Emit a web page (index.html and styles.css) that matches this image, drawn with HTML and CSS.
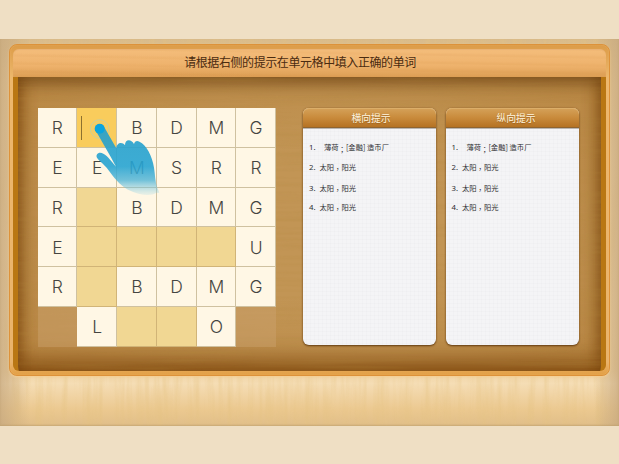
FILE: index.html
```html
<!DOCTYPE html>
<html lang="zh-CN">
<head>
<meta charset="utf-8">
<title>填词游戏</title>
<link rel="stylesheet" href="styles.css">
</head>
<body>
<main class="stage">
  <svg class="grain" aria-hidden="true">
    <filter id="vgrain" x="0" y="0" width="100%" height="100%"><feTurbulence type="fractalNoise" baseFrequency="0.16 0.012" numOctaves="3" seed="4"/><feColorMatrix values="0 0 0 0 .78  0 0 0 0 .54  0 0 0 0 .22  1.5 0 0 0 -.58"/></filter>
    <rect width="100%" height="100%" filter="url(#vgrain)"/>
  </svg>
  <div class="stage-shade"></div>
  <section class="board">
    <header class="title"><h1>请根据右侧的提示在单元格中填入正确的单词</h1></header>
    <div class="well">
      <svg class="grain" aria-hidden="true">
        <filter id="hgrain" x="0" y="0" width="100%" height="100%"><feTurbulence type="fractalNoise" baseFrequency="0.008 0.2" numOctaves="3" seed="8"/><feColorMatrix values="0 0 0 0 .45  0 0 0 0 .25  0 0 0 0 .05  .8 0 0 0 -.32"/></filter>
        <rect width="100%" height="100%" filter="url(#hgrain)"/>
      </svg>
      <div class="puzzle">
        <div class="cells">
          <span>R</span><span class="active"><i class="caret"></i></span><span>B</span><span>D</span><span>M</span><span>G</span>
          <span>E</span><span>E</span><span>M</span><span>S</span><span>R</span><span>R</span>
          <span>R</span><span class="blank"></span><span>B</span><span>D</span><span>M</span><span>G</span>
          <span>E</span><span class="blank"></span><span class="blank"></span><span class="blank"></span><span class="blank"></span><span>U</span>
          <span>R</span><span class="blank"></span><span>B</span><span>D</span><span>M</span><span>G</span>
          <span class="off"></span><span>L</span><span class="blank"></span><span class="blank"></span><span>O</span><span class="off"></span>
        </div>
        <svg class="hand" viewBox="0 0 420 330" aria-hidden="true">
          <defs><linearGradient id="skin" gradientUnits="userSpaceOnUse" x1="0" y1="85" x2="0" y2="290">
            <stop offset="0" stop-color="#249fcb" stop-opacity=".9"/><stop offset=".56" stop-color="#27a4d2" stop-opacity=".9"/><stop offset=".76" stop-color="#4ab2d6" stop-opacity=".78"/><stop offset="1" stop-color="#9bd7ea" stop-opacity=".12"/>
          </linearGradient></defs>
          <circle cx="209" cy="87" r="28" fill="none" stroke="#c9cf9c" stroke-width="3"/>
          <circle cx="209" cy="87" r="21" fill="none" stroke="#dccf86" stroke-width="2"/>
          <path d="M196 90C194 70 218 65 223 82L259 145C259 129 276 123 285 136C284 119 302 114 312 132C315 119 326 121 336 130C356 146 371 181 374 218C376 239 378 258 388 278L378 279C364 289 327 286 294 269C268 255 250 230 235 210C224 194 211 187 202 175C194 162 208 153 220 161C234 168 244 184 258 200C239 163 217 128 196 90Z" fill="url(#skin)"/>
          <circle cx="209" cy="86" r="15" fill="#08a4df"/>
        </svg>
      </div>
      <div class="clues">
        <article class="card across">
          <h2>横向提示</h2>
          <ol>
            <li class="first"><b>1.</b>薄荷<i>；</i>[金融] 造币厂</li>
            <li><b>2.</b>太阳<i>，</i>阳光</li>
            <li><b>3.</b>太阳<i>，</i>阳光</li>
            <li><b>4.</b>太阳<i>，</i>阳光</li>
          </ol>
        </article>
        <article class="card down">
          <h2>纵向提示</h2>
          <ol>
            <li class="first"><b>1.</b>薄荷<i>；</i>[金融] 造币厂</li>
            <li><b>2.</b>太阳<i>，</i>阳光</li>
            <li><b>3.</b>太阳<i>，</i>阳光</li>
            <li><b>4.</b>太阳<i>，</i>阳光</li>
          </ol>
        </article>
      </div>
    </div>
  </section>
</main>
</body>
</html>
```
FILE: styles.css
```css
* { box-sizing: border-box; }

body {
  margin: 0;
  height: 464px;
  padding-top: 39px;
  background: #efdfc4;
  font-family: "Noto Sans CJK SC", sans-serif;
  overflow: hidden;
}

.stage {
  position: relative;
  height: 387px;
  padding: 4.5px 9.5px 0 9px;
  background: linear-gradient(#d9bb8b 0, #e8ca9a 12%, #efd3a4 86%, #f5ddb5 89%, #ebc88f 96%, #e0be89 100%);
}

.grain {
  position: absolute;
  inset: 0;
  width: 100%;
  height: 100%;
  opacity: .6;
}

.stage-shade {
  position: absolute;
  inset: 0;
  background: linear-gradient(90deg, rgba(198, 168, 127, .75), transparent 30px, transparent calc(100% - 25px), rgba(198, 168, 127, .75));
  box-shadow: inset 0 -1px 2px rgba(190, 160, 110, .7);
}

.board {
  position: relative;
  height: 332.5px;
  padding: 4px 3px 4px 2.5px;
  border: 1.5px solid #dd923a;
  border-radius: 8px;
  background: linear-gradient(#dc9c48, #edb76c 10%, #e9b36b 96%, #e39f45);
  box-shadow: 0 1px 2px rgba(245, 205, 145, .9), inset 0 0 1px #f5c27c;
}

.title {
  height: 28.5px;
  padding-right: 18px;
  display: flex;
  align-items: center;
  justify-content: center;
  border-radius: 6px 6px 0 0;
  background: repeating-linear-gradient(1deg, transparent 0 4px, rgba(205, 132, 54, .08) 5px 6px, transparent 8px), linear-gradient(#f4bd7b, #eeb26c 60%, #dc9e54);
  box-shadow: inset 0 1px 1px #e9b275;
}

h1 {
  margin: 0;
  padding-bottom: 2px;
  font-size: 12px;
  line-height: 18px;
  letter-spacing: -.42px;
  font-weight: 400;
  color: #4a2b10;
}

.well {
  position: relative;
  height: 294px;
  padding: 31px 22px 0 20px;
  display: flex;
  justify-content: space-between;
  align-items: flex-start;
  border: solid #b97713;
  border-width: 0 5px;
  border-radius: 0 0 6px 6px;
  overflow: hidden;
  background: radial-gradient(ellipse at center, #c29555 35%, #b98743 100%);
  box-shadow: inset 0 13px 15px -5px rgba(100, 60, 16, .6), inset 0 -18px 22px -7px rgba(126, 70, 12, .85), inset 11px 0 14px -6px rgba(130, 74, 14, .6), inset -11px 0 14px -6px rgba(130, 74, 14, .55);
}

.puzzle {
  position: relative;
  width: 238.5px;
}

.cells {
  display: grid;
  grid-template-columns: repeat(6, 1fr);
  grid-auto-rows: 39.75px;
}

.cells span {
  display: flex;
  align-items: center;
  justify-content: center;
  padding: 2px 0 0 1px;
  border: solid #cfc1a0;
  border-width: 0 1px 1px 0;
  background: #fff7e5;
  font: 300 17.5px/22px Inter, sans-serif;
  color: #454541;
}

.cells .blank {
  background: #f1d793;
  border-color: #d1b477;
}

.cells .active {
  justify-content: flex-start;
  padding-left: 4px;
  background: #f9cc5c;
}

.caret {
  width: 1px;
  height: 24px;
  background: #8d712f;
}

.cells .off {
  background: rgba(205, 164, 115, .42);
  border-color: transparent;
}

.hand {
  position: absolute;
  left: -7.5px;
  top: -8px;
  width: 140px;
  height: 110px;
}

.clues {
  position: relative;
  display: flex;
  gap: 9.5px;
}

.card {
  width: 133px;
  height: 237px;
  border-radius: 6px;
  background: repeating-linear-gradient(90deg, transparent 0 3px, rgba(190, 190, 200, .06) 3px 4px), repeating-linear-gradient(transparent 0 3px, rgba(190, 190, 200, .06) 3px 4px), #f4f4f6;
  box-shadow: 0 1px 2px rgba(83, 45, 8, .8), 0 0 2px rgba(120, 76, 26, .4);
}

h2 {
  margin: 0;
  height: 20px;
  border-radius: 6px 6px 0 0;
  border-bottom: 1px solid #8f6430;
  background: linear-gradient(#d5a25a, #c98b3c 50%, #b57223);
  box-shadow: 0 1px 0 #b9b5b1, inset 0 1px 0 #dcae69;
  text-align: center;
  font-size: 9.8px;
  line-height: 20px;
  font-weight: 400;
  color: #fff5df;
  text-shadow: 0 1px 1px rgba(110, 60, 10, .4);
}

.across h2 { padding-left: 3px; }
.down h2 { padding-left: 8px; }

ol {
  margin: 0;
  padding: 13px 0 0 6px;
  list-style: none;
  display: grid;
  grid-template-rows: 20px 21px 18.5px 12px;
}

li {
  display: flex;
  height: 12px;
  font-size: 7.3px;
  line-height: 12px;
  color: #303033;
  white-space: pre;
}

li b {
  width: 10.5px;
  font: 400 7.8px/12px "Noto Sans", sans-serif;
}

li i {
  padding-top: 2px;
  font-family: "Noto Sans CJK TC", sans-serif;
  font-style: normal;
}

.first b { width: 15px; }
```
